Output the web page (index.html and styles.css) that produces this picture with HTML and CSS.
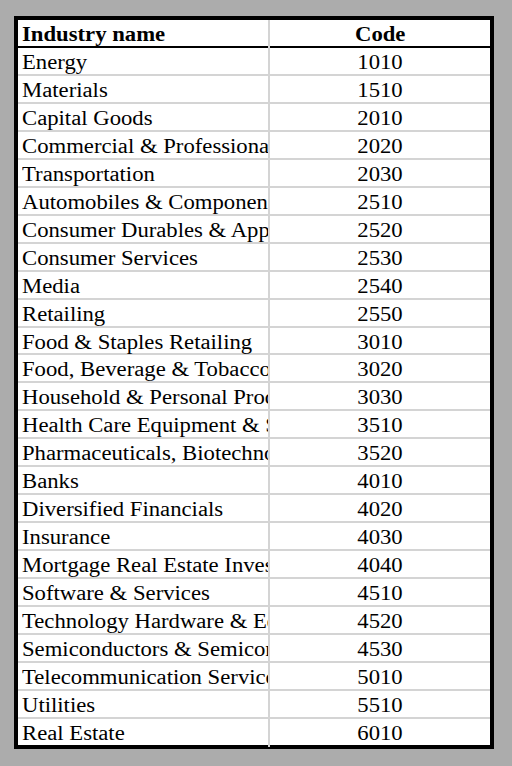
FILE: index.html
```html
<!DOCTYPE html>
<html>
<head>
<meta charset="utf-8">
<link rel="stylesheet" href="styles.css">
</head>
<body>
<div class="sheet">
  <div class="row head">
    <div class="name"><span class="txt">Industry name</span></div>
    <div class="code"><span class="txt">Code</span></div>
  </div>
  <div class="body">
    <div class="row"><div class="name"><span class="txt">Energy</span></div><div class="code"><span class="txt">1010</span></div></div>
    <div class="row"><div class="name"><span class="txt">Materials</span></div><div class="code"><span class="txt">1510</span></div></div>
    <div class="row"><div class="name"><span class="txt">Capital Goods</span></div><div class="code"><span class="txt">2010</span></div></div>
    <div class="row"><div class="name"><span class="txt">Commercial &amp; Professional Services</span></div><div class="code"><span class="txt">2020</span></div></div>
    <div class="row"><div class="name"><span class="txt">Transportation</span></div><div class="code"><span class="txt">2030</span></div></div>
    <div class="row"><div class="name"><span class="txt">Automobiles &amp; Components</span></div><div class="code"><span class="txt">2510</span></div></div>
    <div class="row"><div class="name"><span class="txt">Consumer Durables &amp; Apparel</span></div><div class="code"><span class="txt">2520</span></div></div>
    <div class="row"><div class="name"><span class="txt">Consumer Services</span></div><div class="code"><span class="txt">2530</span></div></div>
    <div class="row"><div class="name"><span class="txt">Media</span></div><div class="code"><span class="txt">2540</span></div></div>
    <div class="row"><div class="name"><span class="txt">Retailing</span></div><div class="code"><span class="txt">2550</span></div></div>
    <div class="row"><div class="name"><span class="txt">Food &amp; Staples Retailing</span></div><div class="code"><span class="txt">3010</span></div></div>
    <div class="row"><div class="name"><span class="txt">Food, Beverage &amp; Tobacco</span></div><div class="code"><span class="txt">3020</span></div></div>
    <div class="row"><div class="name"><span class="txt">Household &amp; Personal Products</span></div><div class="code"><span class="txt">3030</span></div></div>
    <div class="row"><div class="name"><span class="txt">Health Care Equipment &amp; Services</span></div><div class="code"><span class="txt">3510</span></div></div>
    <div class="row"><div class="name"><span class="txt">Pharmaceuticals, Biotechnology &amp; Life Sciences</span></div><div class="code"><span class="txt">3520</span></div></div>
    <div class="row"><div class="name"><span class="txt">Banks</span></div><div class="code"><span class="txt">4010</span></div></div>
    <div class="row"><div class="name"><span class="txt">Diversified Financials</span></div><div class="code"><span class="txt">4020</span></div></div>
    <div class="row"><div class="name"><span class="txt">Insurance</span></div><div class="code"><span class="txt">4030</span></div></div>
    <div class="row"><div class="name"><span class="txt">Mortgage Real Estate Investment Trusts</span></div><div class="code"><span class="txt">4040</span></div></div>
    <div class="row"><div class="name"><span class="txt">Software &amp; Services</span></div><div class="code"><span class="txt">4510</span></div></div>
    <div class="row"><div class="name"><span class="txt">Technology Hardware &amp; Equipment</span></div><div class="code"><span class="txt">4520</span></div></div>
    <div class="row"><div class="name"><span class="txt">Semiconductors &amp; Semiconductor Equipment</span></div><div class="code"><span class="txt">4530</span></div></div>
    <div class="row"><div class="name"><span class="txt">Telecommunication Services</span></div><div class="code"><span class="txt">5010</span></div></div>
    <div class="row"><div class="name"><span class="txt">Utilities</span></div><div class="code"><span class="txt">5510</span></div></div>
    <div class="row"><div class="name"><span class="txt">Real Estate</span></div><div class="code"><span class="txt">6010</span></div></div>
  </div>
</div>
</body>
</html>
```

FILE: styles.css
```css
html, body {
  margin: 0;
  padding: 0;
  background: #acacac;
}
body {
  padding: 16px 0 0 14px;
}
.sheet {
  box-sizing: border-box;
  width: 480px;
  height: 733px;
  border: 4px solid #000;
  background: #fff;
  display: flex;
  flex-direction: column;
  font-family: "Liberation Serif", "Times New Roman", serif;
  font-size: 20px;
  color: #000;
}
.row {
  display: grid;
  grid-template-columns: 252px 1fr;
  line-height: 28.6px;
}
.head {
  height: 26px;
  line-height: 29px;
  font-weight: bold;
  border-bottom: 2px solid #000;
  flex: none;
}
.body {
  flex: 1;
  display: flex;
  flex-direction: column;
}
.body .row {
  flex: 1 1 0;
  border-bottom: 2px solid #d4d4d4;
  min-height: 0;
}
.body .row:last-child {
  border-bottom: none;
}
.name {
  padding-left: 4px;
  white-space: nowrap;
  overflow-x: clip;
  overflow-y: visible;
  border-right: 2px solid #d4d4d4;
}
.code {
  text-align: center;
  white-space: nowrap;
}
.txt {
  display: inline-block;
  transform: scaleX(1.135);
  transform-origin: left center;
}
.code .txt {
  transform-origin: center center;
}
```
